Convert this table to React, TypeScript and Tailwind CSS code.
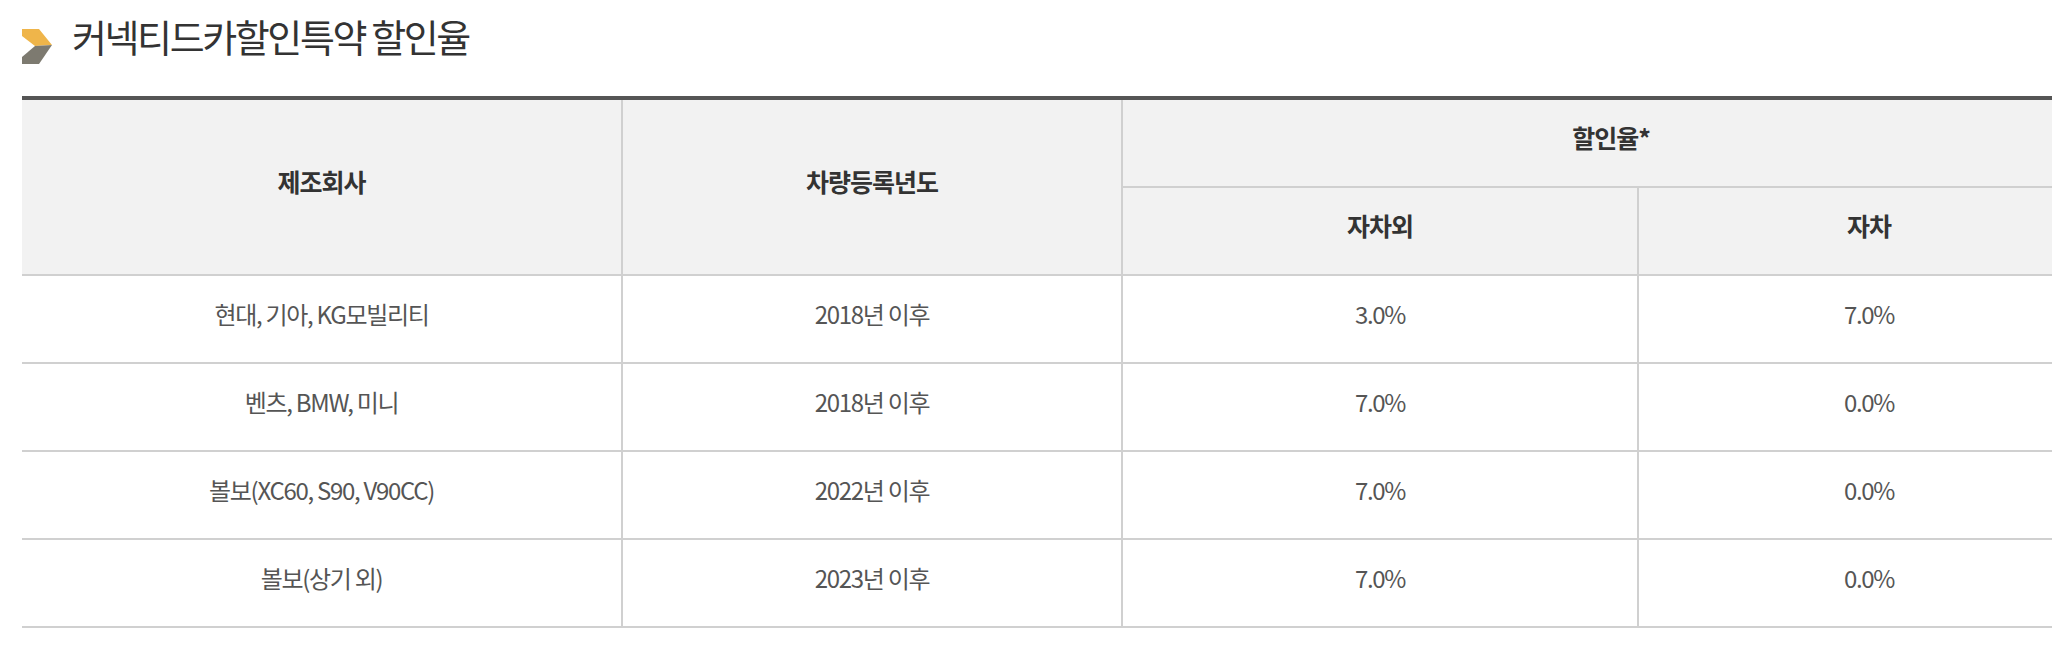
import React from "react";

const rows = [
  { maker: "현대, 기아, KG모빌리티", year: "2018년 이후", other: "3.0%", own: "7.0%" },
  { maker: "벤츠, BMW, 미니", year: "2018년 이후", other: "7.0%", own: "0.0%" },
  { maker: "볼보(XC60, S90, V90CC)", year: "2022년 이후", other: "7.0%", own: "0.0%" },
  { maker: "볼보(상기 외)", year: "2023년 이후", other: "7.0%", own: "0.0%" },
];

function TitleIcon() {
  return (
    <svg width="30" height="35" viewBox="0 0 30 35" className="shrink-0 mt-[29px]">
      <polygon points="0,0 17,0 30,16 13,17 0,7" fill="#efb54a" />
      <polygon points="13,17 30,16 17,35 0,35 0,28" fill="#7d7a70" />
    </svg>
  );
}

const th = "flex items-center justify-center pb-[10px] bg-[#f2f2f2] border-b-2 border-r-2 border-[#d0d0d0] text-[25px] font-bold text-[#333] tracking-[-1px]";
const td = "flex items-center justify-center pb-[10px] h-[88px] border-b-2 border-r-2 border-[#d0d0d0] text-[24px] text-[#555] tracking-[-1.3px]";

export default function App() {
  return (
    <div className="w-[2052px] h-[650px] overflow-hidden bg-white pl-[22px] font-['Noto_Sans_CJK_KR',sans-serif]">
      <div className="flex items-start gap-[20px] h-[96px]">
        <TitleIcon />
        <h2 className="mt-[17px] text-[38px] leading-none text-[#333] tracking-[-2.4px] font-normal">커넥티드카할인특약 할인율</h2>
      </div>

      <div className="w-[2079px] border-t-4 border-[#555]">
        <div className="grid grid-cols-[601px_500px_516px_462px]">
          <div className={th + " row-span-2 h-[176px]"}>제조회사</div>
          <div className={th + " row-span-2 h-[176px]"}>차량등록년도</div>
          <div className={th + " col-span-2 h-[88px]"}>할인율*</div>
          <div className={th + " h-[88px]"}>자차외</div>
          <div className={th + " h-[88px] border-r-0"}>자차</div>

          {rows.map((r) => (
            <React.Fragment key={r.maker}>
              <div className={td}>{r.maker}</div>
              <div className={td}>{r.year}</div>
              <div className={td}>{r.other}</div>
              <div className={td + " border-r-0"}>{r.own}</div>
            </React.Fragment>
          ))}
        </div>
      </div>
    </div>
  );
}
